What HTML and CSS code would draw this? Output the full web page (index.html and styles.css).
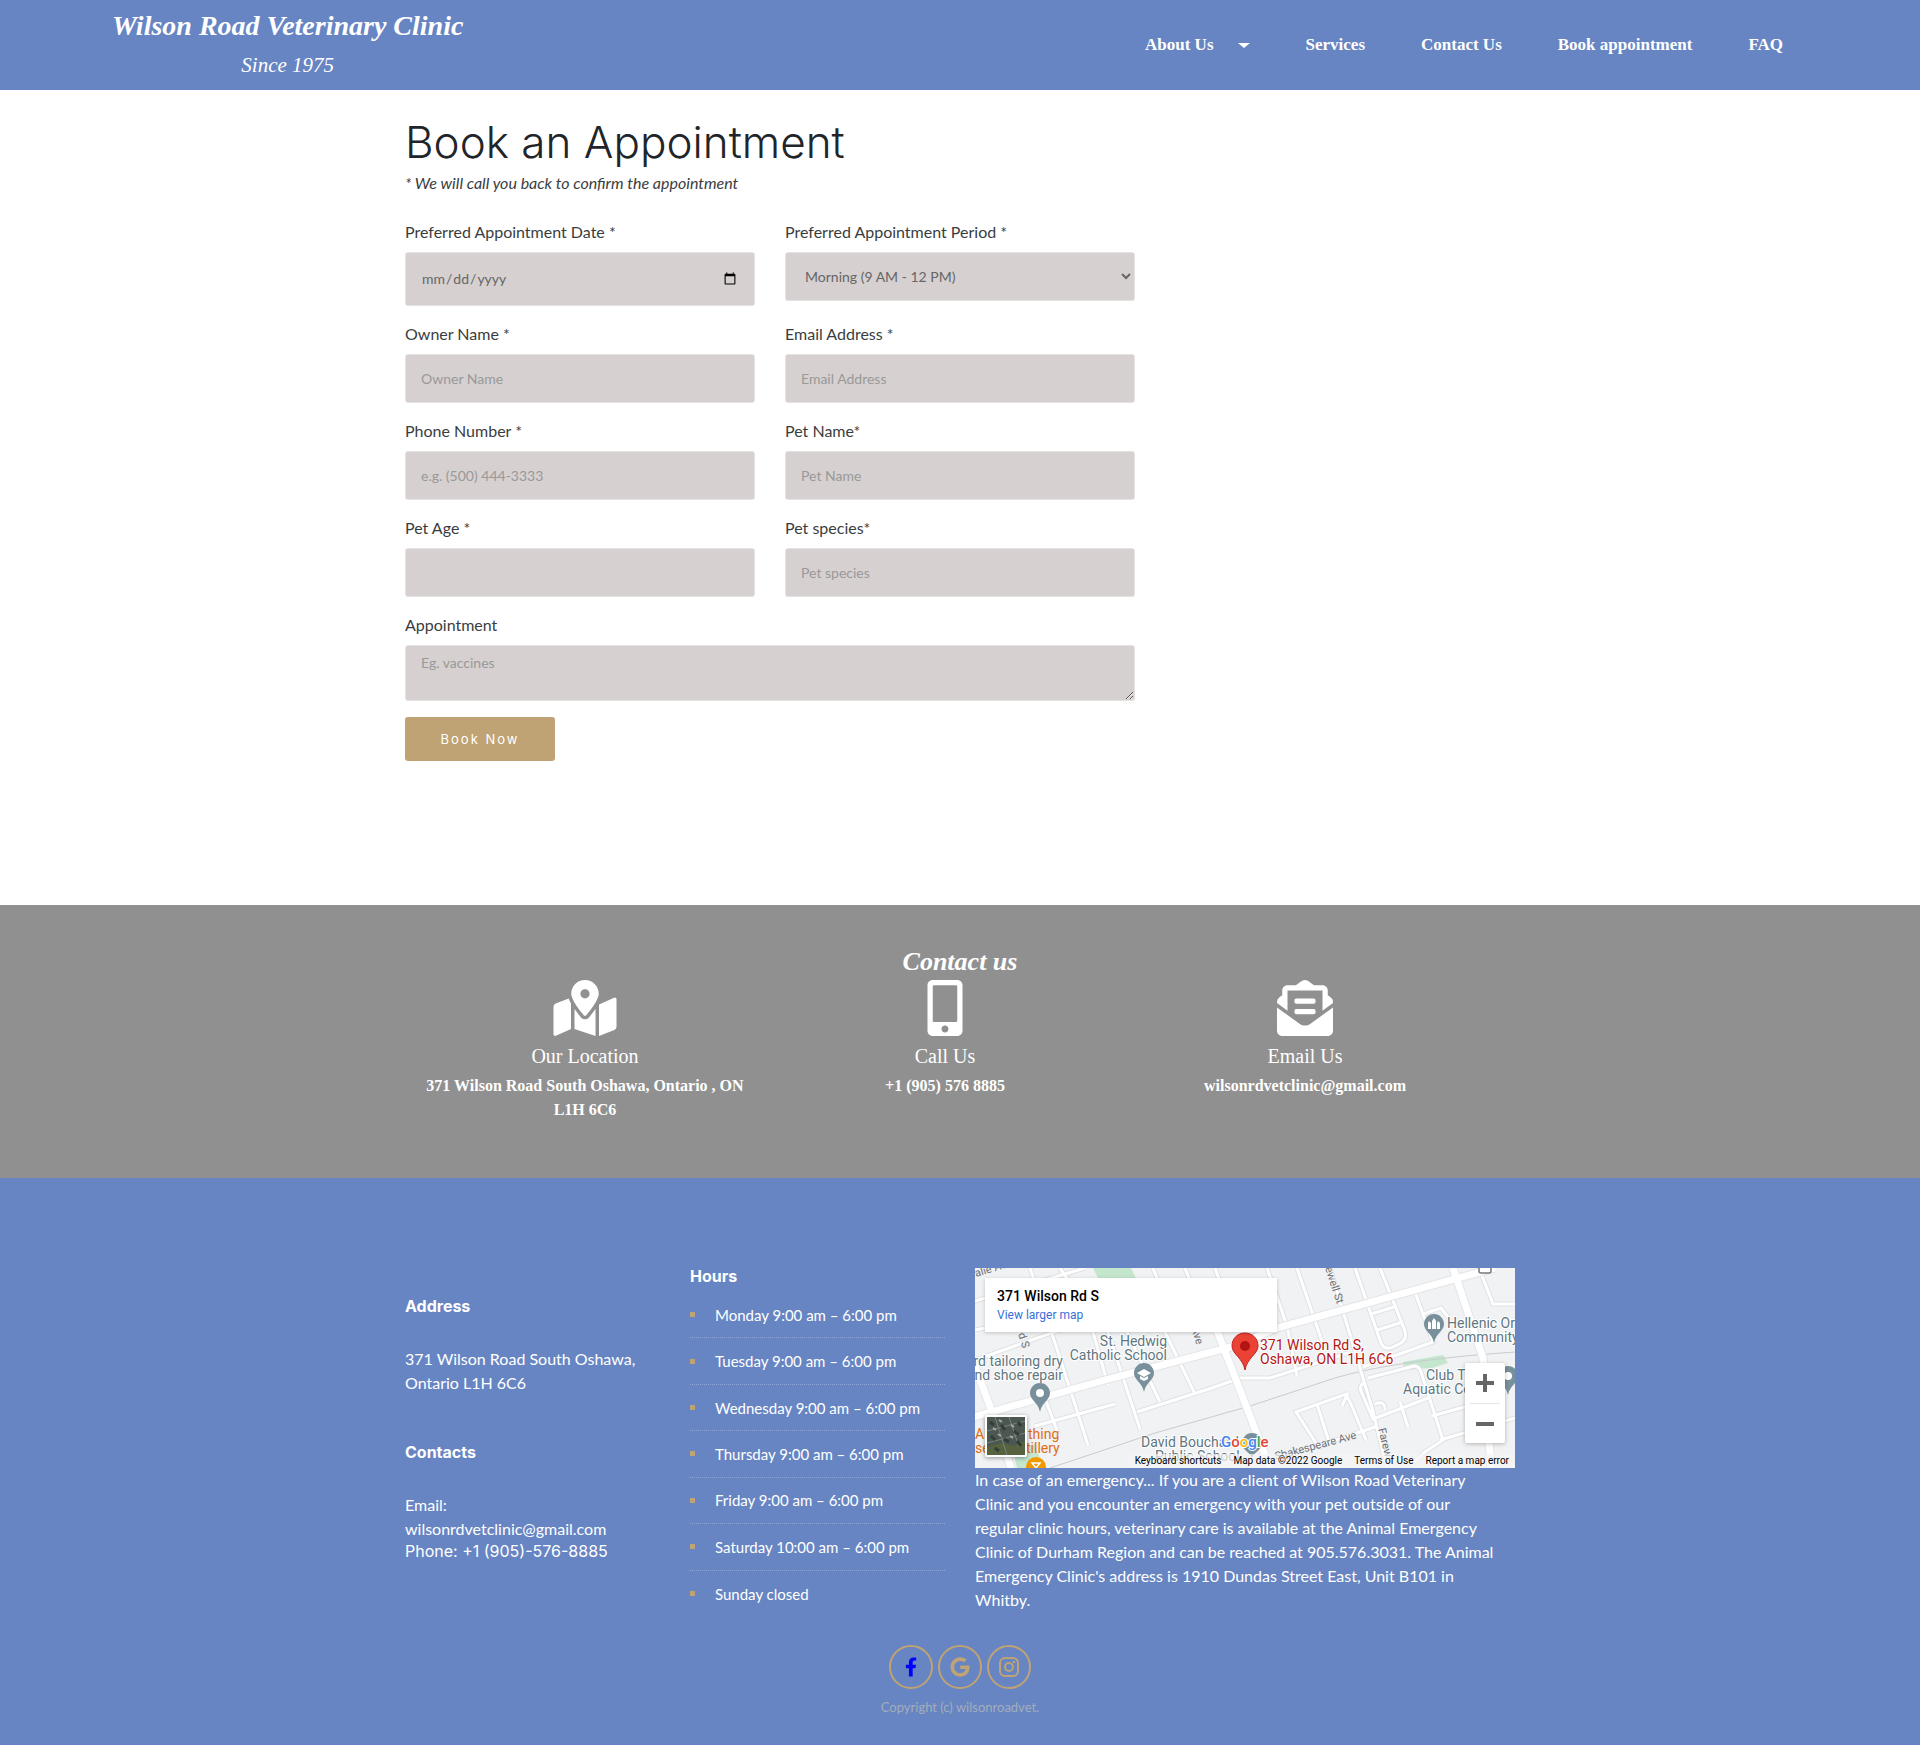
FILE: index.html
```html
<!DOCTYPE html>
<html lang="en">
<head>
<meta charset="utf-8">
<title>Book an Appointment - Wilson Road Veterinary Clinic</title>
<meta name="viewport" content="width=device-width, initial-scale=1">
<link rel="stylesheet" href="styles.css">
</head>
<body>
<header class="site-header">
  <a class="brand" href="#">
    <span class="brand-name">Wilson Road Veterinary Clinic</span>
    <span class="brand-since">Since 1975</span>
  </a>
  <nav class="main-nav">
    <a class="has-menu" href="#">About Us</a>
    <a href="#">Services</a>
    <a href="#contact">Contact Us</a>
    <a href="#">Book appointment</a>
    <a href="#">FAQ</a>
  </nav>
</header>

<main class="booking container">
  <h1>Book an Appointment</h1>
  <p class="note">* We will call you back to confirm the appointment</p>
  <form class="booking-form">
    <div class="field"><label for="date">Preferred Appointment Date *</label><input class="date" id="date" type="date"></div>
    <div class="field"><label for="period">Preferred Appointment Period *</label>
      <select id="period"><option>Morning (9 AM - 12 PM)</option><option>Afternoon (12 PM - 6 PM)</option></select></div>
    <div class="field"><label for="owner">Owner Name *</label><input id="owner" type="text" placeholder="Owner Name"></div>
    <div class="field"><label for="email">Email Address *</label><input id="email" type="email" placeholder="Email Address"></div>
    <div class="field"><label for="phone">Phone Number *</label><input id="phone" type="tel" placeholder="e.g. (500) 444-3333"></div>
    <div class="field"><label for="pet">Pet Name*</label><input id="pet" type="text" placeholder="Pet Name"></div>
    <div class="field"><label for="age">Pet Age *</label><input id="age" type="text"></div>
    <div class="field"><label for="species">Pet species*</label><input id="species" type="text" placeholder="Pet species"></div>
    <div class="field wide"><label for="reason">Appointment</label><textarea id="reason" placeholder="Eg. vaccines"></textarea></div>
    <button class="submit" type="submit">Book Now</button>
  </form>
</main>

<section class="contact" id="contact">
  <div class="container">
    <h2>Contact us</h2>
    <div class="contact-grid">
      <div class="contact-item">
        <svg width="64" height="56" viewBox="0 0 576 512" aria-hidden="true"><path d="M288 0c-69.59 0-126 56.41-126 126 0 56.26 82.35 158.8 113.9 196.02 6.39 7.54 17.82 7.54 24.2 0C331.65 284.8 414 182.26 414 126 414 56.41 357.59 0 288 0zm0 168c-23.2 0-42-18.8-42-42s18.8-42 42-42 42 18.8 42 42-18.8 42-42 42zM20.12 215.95A32.006 32.006 0 0 0 0 245.66v250.32c0 11.32 11.43 19.06 21.94 14.86L160 448V214.92c-8.84-15.98-16.07-31.54-21.25-46.42L20.12 215.95zM288 359.67c-14.07 0-27.38-6.18-36.51-16.96-19.66-23.2-40.57-49.62-59.49-76.72v182l192 64V266c-18.92 27.09-39.82 53.52-59.49 76.72-9.13 10.77-22.44 16.95-36.51 16.95zm266.06-198.51L416 224v288l139.88-55.95A31.996 31.996 0 0 0 576 426.34V176.02c0-11.32-11.43-19.06-21.94-14.86z"/></svg>
        <h3>Our Location</h3>
        <p>371 Wilson Road South Oshawa, Ontario , ON L1H 6C6</p>
      </div>
      <div class="contact-item">
        <svg width="36" height="56" viewBox="0 0 320 512" aria-hidden="true"><path d="M272 0H48C21.500 0 0 21.500 0 48v416c0 26.500 21.500 48 48 48h224c26.500 0 48-21.500 48-48V48c0-26.500-21.500-48-48-48zM160 480c-17.700 0-32-14.300-32-32s14.300-32 32-32 32 14.300 32 32-14.300 32-32 32zm112-108c0 6.600-5.400 12-12 12H60c-6.600 0-12-5.400-12-12V60c0-6.600 5.400-12 12-12h200c6.600 0 12 5.400 12 12v312z"/></svg>
        <h3>Call Us</h3>
        <p>+1 (905) 576 8885</p>
      </div>
      <div class="contact-item">
        <svg width="58" height="56" viewBox="0 0 512 512" aria-hidden="true"><path d="M176 216h160c8.840 0 16-7.160 16-16v-16c0-8.840-7.160-16-16-16H176c-8.840 0-16 7.160-16 16v16c0 8.840 7.160 16 16 16zm-16 80c0 8.840 7.160 16 16 16h160c8.840 0 16-7.160 16-16v-16c0-8.840-7.160-16-16-16H176c-8.840 0-16 7.160-16 16v16zm96 121.130c-16.420 0-32.840-5.060-46.860-15.190L0 250.860V464c0 26.510 21.490 48 48 48h416c26.510 0 48-21.490 48-48V250.860L302.860 401.940c-14.020 10.120-30.440 15.190-46.860 15.190zm237.610-254.180c-8.850-6.940-17.240-13.470-29.610-22.810V96c0-26.510-21.490-48-48-48h-77.550c-3.040-2.200-5.870-4.260-9.040-6.560C312.600 29.170 279.200-.350 256 0c-23.200-.350-56.590 29.170-73.410 41.440-3.170 2.300-6 4.360-9.040 6.560H96c-26.510 0-48 21.490-48 48v44.140c-12.370 9.330-20.760 15.870-29.610 22.810A47.995 47.995 0 0 0 0 200.720v10.650l96 69.350V96h320v184.720l96-69.350v-10.650c0-14.740-6.780-28.670-18.390-37.770z"/></svg>
        <h3>Email Us</h3>
        <p>wilsonrdvetclinic@gmail.com</p>
      </div>
    </div>
  </div>
</section>

<footer class="site-footer">
  <div class="container footer-grid">
    <div class="address">
      <h4>Address</h4>
      <p>371 Wilson Road South Oshawa, Ontario L1H 6C6</p>
      <h4 class="second">Contacts</h4>
      <p>Email:<br>wilsonrdvetclinic@gmail.com</p>
      <p class="phone">Phone: +1 (905)-576-8885</p>
    </div>
    <div class="hours">
      <h4>Hours</h4>
      <ul>
        <li>Monday 9:00 am – 6:00 pm</li>
        <li>Tuesday 9:00 am – 6:00 pm</li>
        <li>Wednesday 9:00 am – 6:00 pm</li>
        <li>Thursday 9:00 am – 6:00 pm</li>
        <li>Friday 9:00 am – 6:00 pm</li>
        <li>Saturday 10:00 am – 6:00 pm</li>
        <li>Sunday closed</li>
      </ul>
    </div>
    <div class="find-us">
      <div class="map">
        <svg class="map-canvas" viewBox="0 0 540 200" preserveAspectRatio="xMidYMid slice" role="img" aria-label="Map around 371 Wilson Rd S">
          <rect width="540" height="200" fill="#f1f2f4"/>
          <g fill="#c3e6cd">
            <path d="M118 0h38l6 12h-38zM38 183l22-7 8 24H42zM428 94l40-7 5 8-16 5-28 2z"/>
          </g>
          <g fill="none" stroke="#c9cbce" stroke-width="1"><path d="M75 200L180 165 275 138 360 110Q420 92 540 84"/></g>
          <g fill="none" stroke="#dfe1e4" stroke-width="5">
            <path d="M0 33L60 15 110 0M0 62L50 52M0 92L85 62 150 52M55 0L85 90 113 177M85 0l20 30M60 158l80-22M70 130l14 38M118 64l15 53M133 64l32 97M152 64l33 70M190 64l30 62M162 144l75-24 28-10h30l78-25M178 0l12 30M210 0l16 40M240 0l18 50M292 0l20 58 10 50M322 0l28 82M355 0l42 140 15 60M380 0l26 75q4 8 12 4l8-4q6-4 4-12L405 0M396 46l26-8M402 62l26-8M440 24l18 50-70 25M448 46l18-6 8 10M504 0l14 36h22M393 110l46-12q5 0 7 6l22 68-18 12-15 14M388 115q-4 4-2 8l12 28 58-22M457 148l50-14M465 172l75-22M425 134l8 25M400 136q10-4 10 6M403 158l-60 20-22-34 50-18 5 10 15 36M342 136l12 38M373 125l-6 13"/>
          </g>
          <g fill="none" stroke="#fff" stroke-width="3">
            <path d="M0 33L60 15 110 0M0 62L50 52M0 92L85 62 150 52M55 0L85 90 113 177M85 0l20 30M60 158l80-22M70 130l14 38M118 64l15 53M133 64l32 97M152 64l33 70M190 64l30 62M162 144l75-24 28-10h30l78-25M178 0l12 30M210 0l16 40M240 0l18 50M292 0l20 58 10 50M322 0l28 82M355 0l42 140 15 60M380 0l26 75q4 8 12 4l8-4q6-4 4-12L405 0M396 46l26-8M402 62l26-8M440 24l18 50-70 25M448 46l18-6 8 10M504 0l14 36h22M393 110l46-12q5 0 7 6l22 68-18 12-15 14M388 115q-4 4-2 8l12 28 58-22M457 148l50-14M465 172l75-22M425 134l8 25M400 136q10-4 10 6M403 158l-60 20-22-34 50-18 5 10 15 36M342 136l12 38M373 125l-6 13"/>
          </g>
          <g fill="none" stroke="#e3e5e8" stroke-width="9"><path d="M-5 150L130 112 260 78 302 60 520 0M0 98L20 152 36 200M241 60L275 148 295 200M478 0L508 90 516 200"/></g>
          <g fill="none" stroke="#fff" stroke-width="7"><path d="M-5 150L130 112 260 78 302 60 520 0M0 98L20 152 36 200M241 60L275 148 295 200M478 0L508 90 516 200"/></g>
          <g class="street-label">
            <text x="1" y="9" transform="rotate(-17 1 9)">alie Av</text>
            <text x="43" y="66" transform="rotate(72 43 66)">d S</text>
            <text x="216" y="60" transform="rotate(72 216 60)">Ave</text>
            <text x="350" y="0" transform="rotate(72 350 0)">ewell St</text>
            <text x="301" y="192" transform="rotate(-15 301 192)">Shakespeare Ave</text>
            <text x="403" y="161" transform="rotate(76 403 161)">Farew</text>
          </g>
          <rect x="504" y="-8" width="12" height="13" rx="2" fill="#fff" stroke="#777" stroke-width="1.500"/>
          <g class="place-label">
            <text x="192" y="78" text-anchor="end">St. Hedwig</text>
            <text x="192" y="92" text-anchor="end">Catholic School</text>
            <text x="88" y="98" text-anchor="end">rd tailoring dry</text>
            <text x="88" y="112" text-anchor="end">nd shoe repair</text>
            <text x="166" y="179">David Bouchard</text>
            <text x="180" y="193">Public School</text>
            <text x="472" y="60">Hellenic Or</text>
            <text x="472" y="74">Community</text>
            <text x="451" y="112">Club T</text>
            <text x="428" y="126">Aquatic Ce</text>
          </g>
          <g class="shop-label"><text x="0" y="171">Al</text><text x="53" y="171">thing</text><text x="0" y="185">se</text><text x="51" y="185">tillery</text></g>
          <g class="home-label"><text x="285" y="82">371 Wilson Rd S,</text><text x="285" y="96">Oshawa, ON L1H 6C6</text></g>
          <g fill="#78909c">
            <path d="M65 115c6 0 10 5 10 10 0 7-8 9-10 19-2-10-10-12-10-19 0-5 4-10 10-10z"/>
            <path d="M169 95c6 0 10 5 10 10 0 7-8 9-10 19-2-10-10-12-10-19 0-5 4-10 10-10z"/>
            <path d="M459 46c6 0 10 5 10 10 0 7-8 9-10 19-2-10-10-12-10-19 0-5 4-10 10-10z"/>
            <path d="M533 98c6 0 10 5 10 10 0 7-8 9-10 19-2-10-10-12-10-19 0-5 4-10 10-10z"/>
            <path d="M277 165c6 0 10 5 10 10 0 7-8 9-10 15-2-6-10-8-10-15 0-5 4-10 10-10z"/>
          </g>
          <g fill="#fff"><circle cx="65" cy="125" r="4"/><circle cx="533" cy="108" r="4"/><path d="M162 105l7-4 7 4-7 4zM165 108l4 2 4-2v3l-4 2-4-2zM453 61v-6l1-2 2 2v6zM457 61v-8l2-3 2 3v8zM462 61v-6l1-2 2 2v6z"/></g>
          <circle cx="61" cy="199" r="10" fill="#f29900"/><path d="M57 195h8l-4 5z" fill="#f29900" stroke="#fff" stroke-width="1.500"/>
          <path d="M270 65c8 0 13 6 13 13 0 8-11 12-13 24-2-12-13-16-13-24 0-7 5-13 13-13z" fill="#ea4335" stroke="#c5221f" stroke-width="1"/><circle cx="270" cy="78" r="5" fill="#b31412"/>
          <g class="google"><text x="246" y="179"><tspan fill="#4285f4">G</tspan><tspan fill="#ea4335">o</tspan><tspan fill="#fbbc04">o</tspan><tspan fill="#4285f4">g</tspan><tspan fill="#34a853">l</tspan><tspan fill="#ea4335">e</tspan></text></g>
        </svg>
        <div class="map-card"><strong>371 Wilson Rd S</strong><a href="#">View larger map</a></div>
        <button class="satellite" type="button" aria-label="Show satellite imagery">
          <svg width="38" height="38" viewBox="0 0 38 38" aria-hidden="true"><rect width="38" height="38" fill="#4d5752"/><path d="M0 30l14-4 12 3 12-5v14H0z" fill="#56633e"/><path d="M8 0l12 38M22 0l10 30M0 14l38-10M0 26l38-10" stroke="#79817f" stroke-width="1"/><path d="M3 5l4 3M14 8l4 5M27 14l5 4M4 19l4 4M17 22l5 3M30 24l4 5M31 5l3 4M8 31l4 3" stroke="#323d37" stroke-width="3"/><path d="M12 3l3 2M24 8l3 2M11 17l3 2M23 19l3 2M6 11l3 2" stroke="#a5aaa7" stroke-width="2"/></svg>
        </button>
        <div class="map-zoom">
          <button type="button" aria-label="Zoom in"><svg width="18" height="18" viewBox="0 0 18 18"><path d="M7 0h4v7h7v4h-7v7H7v-7H0V7h7z" fill="#666"/></svg></button>
          <button type="button" aria-label="Zoom out"><svg width="18" height="18" viewBox="0 0 18 18"><path d="M0 7h18v4H0z" fill="#666"/></svg></button>
        </div>
        <div class="map-legal"><a href="#">Keyboard shortcuts</a><span>Map data ©2022 Google</span><a href="#">Terms of Use</a><a href="#">Report a map error</a></div>
      </div>
      <p>In case of an emergency... If you are a client of Wilson Road Veterinary<br>
      Clinic and you encounter an emergency with your pet outside of our<br>
      regular clinic hours, veterinary care is available at the Animal Emergency<br>
      Clinic of Durham Region and can be reached at 905.576.3031. The Animal<br>
      Emergency Clinic's address is 1910 Dundas Street East, Unit B101 in<br>
      Whitby.</p>
    </div>
  </div>
  <div class="social">
    <a class="facebook" href="#" aria-label="Facebook"><svg width="12" height="20" viewBox="0 0 320 512"><path d="M279.140 288l14.220-92.660h-88.910v-60.130c0-25.350 12.420-50.060 52.240-50.060h40.420V6.260S260.430 0 225.360 0c-73.220 0-121.080 44.380-121.080 124.720v70.620H22.890V288h81.390v224h100.170V288z"/></svg></a>
    <a href="#" aria-label="Google"><svg width="20" height="20" viewBox="0 0 488 512"><path d="M488 261.800C488 403.300 391.100 504 248 504 110.800 504 0 393.200 0 256S110.800 8 248 8c66.800 0 123 24.500 166.300 64.900l-67.500 64.900C258.500 52.600 94.300 116.600 94.300 256c0 86.500 69.100 156.600 153.700 156.600 98.200 0 135-70.400 140.800-106.900H248v-85.300h236.100c2.300 12.700 3.900 24.900 3.900 41.400z"/></svg></a>
    <a href="#" aria-label="Instagram"><svg width="20" height="20" viewBox="0 0 20 20"><rect x="1" y="1" width="18" height="18" rx="5" fill="none" stroke="currentColor" stroke-width="2"/><circle cx="10" cy="10" r="4" fill="none" stroke="currentColor" stroke-width="2"/><circle cx="15" cy="5" r="1.300"/></svg></a>
  </div>
  <p class="copyright">Copyright (c) wilsonroadvet.</p>
</footer>
</body>
</html>
```
FILE: styles.css
```css
* { box-sizing: border-box; }
body { margin: 0; background: #fff; color: #212529; font: 400 16px/24px Lato, sans-serif; }
h1, h2, h3, h4, p, ul { margin: 0; }
a { color: inherit; text-decoration: none; }
button { border: 0; cursor: pointer; }
.container { max-width: 1110px; margin: 0 auto; }

.site-header { display: flex; justify-content: space-between; align-items: center; height: 90px; padding: 0 137px 0 112px; background: #6785c3; color: #fff; }
.brand { display: flex; flex-direction: column; text-align: center; font-family: "Liberation Serif", serif; font-style: italic; }
.brand-name { font-size: 28px; line-height: 40px; font-weight: 700; }
.brand-since { font-size: 21px; line-height: 38px; font-weight: 400; }
.main-nav { display: flex; gap: 56px; font: 700 17px/24px "Liberation Serif", serif; }
.has-menu { display: flex; align-items: center; gap: 24px; }
.has-menu::after { content: ""; border: 6px solid transparent; border-top: 5px solid #fff; border-bottom: 0; }

.booking { padding: 28px 0 144px; }
h1 { font: 300 44px/48px Inter, sans-serif; margin-bottom: 5px; }
.note { color: #3a3d40; font-style: italic; margin-bottom: 24px; }
.booking-form { display: grid; grid-template-columns: 1fr 1fr; gap: 16px 30px; max-width: 730px; align-items: start; padding-top: 1px; }
.field { display: flex; flex-direction: column; gap: 9px; }
.field label { color: #3a3d40; line-height: 23px; }
.wide { grid-column: 1 / -1; }
.field input, .field select, .field textarea { height: 49px; width: 100%; padding: 0 15px; border: 1px solid #e5e2e2; border-radius: 3px; background: #d6d0d0; color: #666; font: 400 14px/20px Lato, sans-serif; }
.field .date { height: 54px; }
.field select { padding: 0 0 0 15px; }
.field textarea { display: block; height: 56px; padding: 7px 15px; resize: vertical; }
.field ::placeholder { color: #999; opacity: 1; }
.submit { justify-self: start; width: 150px; height: 44px; border-radius: 3px; background: #bfa374; color: #fff; font: 400 13px/16px Inter, sans-serif; letter-spacing: 2px; }

.contact { padding: 39px 0 56px; background: #909090; color: #fff; font-family: "Liberation Serif", serif; text-align: center; }
.contact h2 { font-size: 26px; line-height: 36px; font-style: italic; }
.contact-grid { display: grid; grid-template-columns: repeat(3, 1fr); margin-right: 30px; }
.contact-item { padding: 0 15px; }
.contact-item svg { display: block; margin: 0 auto 8px; fill: #fff; }
.contact h3 { font-size: 20px; line-height: 24px; font-weight: 400; margin-bottom: 6px; }
.contact p { font-weight: 700; }

.site-footer { padding: 90px 0 28px; background: #6785c3; color: #fff; }
.footer-grid { display: grid; grid-template-columns: 255px 255px 1fr; gap: 30px; }
h4 { font: 700 16px/20px Inter, sans-serif; }
.address { padding-top: 28px; }
.address h4 { margin-bottom: 31px; }
.address .second { margin-top: 47px; }
.address .phone { font: 400 16px/20px Inter, sans-serif; }
.hours h4 { line-height: 16px; }
.hours ul { display: grid; grid-auto-rows: 1fr; height: 325px; margin-top: 8px; padding: 0; list-style: none; }
.hours li { display: flex; align-items: center; gap: 20px; border-bottom: 1px dotted #8ea7d8; font-size: 15px; line-height: 20px; }
.hours li::before { content: ""; width: 5px; height: 5px; background: #bfa374; }
.hours li:last-child { border-bottom: 0; }

.map { position: relative; height: 200px; overflow: hidden; font-family: Roboto, sans-serif; }
.map-canvas { display: block; width: 100%; height: 200px; }
.street-label { font-size: 11px; fill: #6b7075; }
.place-label { font-size: 14px; fill: #5f7680; stroke: #fff; stroke-width: 2px; paint-order: stroke; }
.shop-label { font-size: 14px; fill: #dd6e12; }
.home-label { font-size: 14px; fill: #b31412; stroke: #fff; stroke-width: 2px; paint-order: stroke; }
.google { font-size: 15px; font-weight: 500; stroke: #fff; stroke-width: 2px; paint-order: stroke; }
.map-card { position: absolute; left: 10px; top: 10px; display: flex; flex-direction: column; width: 292px; height: 54px; padding: 8px 12px; background: #fff; box-shadow: 0 1px 4px #0003; }
.map-card strong { color: #000; font-size: 14px; line-height: 20px; font-weight: 500; }
.map-card a { color: #3a6fd8; font-size: 12px; line-height: 18px; }
.satellite { position: absolute; left: 10px; bottom: 11px; padding: 2px; border-radius: 2px; background: #fff; box-shadow: 0 1px 4px #0006; }
.satellite svg { display: block; }
.map-zoom { position: absolute; right: 10px; top: 95px; width: 40px; padding: 0 5px; border-radius: 2px; background: #fff; box-shadow: 0 1px 4px #0004; }
.map-zoom button { display: grid; place-items: center; width: 30px; height: 40px; padding: 0; background: #fff; }
.map-zoom button + button { border-top: 1px solid #e6e6e6; }
.map-legal { position: absolute; right: 0; bottom: 0; display: flex; gap: 12px; padding: 0 6px; background: #f5f5f5b3; color: #000; font-size: 10px; line-height: 14px; }

.social { display: flex; justify-content: center; gap: 5px; margin-top: 28px; color: #bfa374; }
.social a { display: grid; place-items: center; width: 44px; height: 44px; border: 2px solid #bfa374; border-radius: 50%; }
.social svg { fill: currentColor; }
.social .facebook svg { fill: #00f; }
.copyright { margin-top: 8px; text-align: center; font-size: 13px; line-height: 20px; color: #a3adba; }
```
